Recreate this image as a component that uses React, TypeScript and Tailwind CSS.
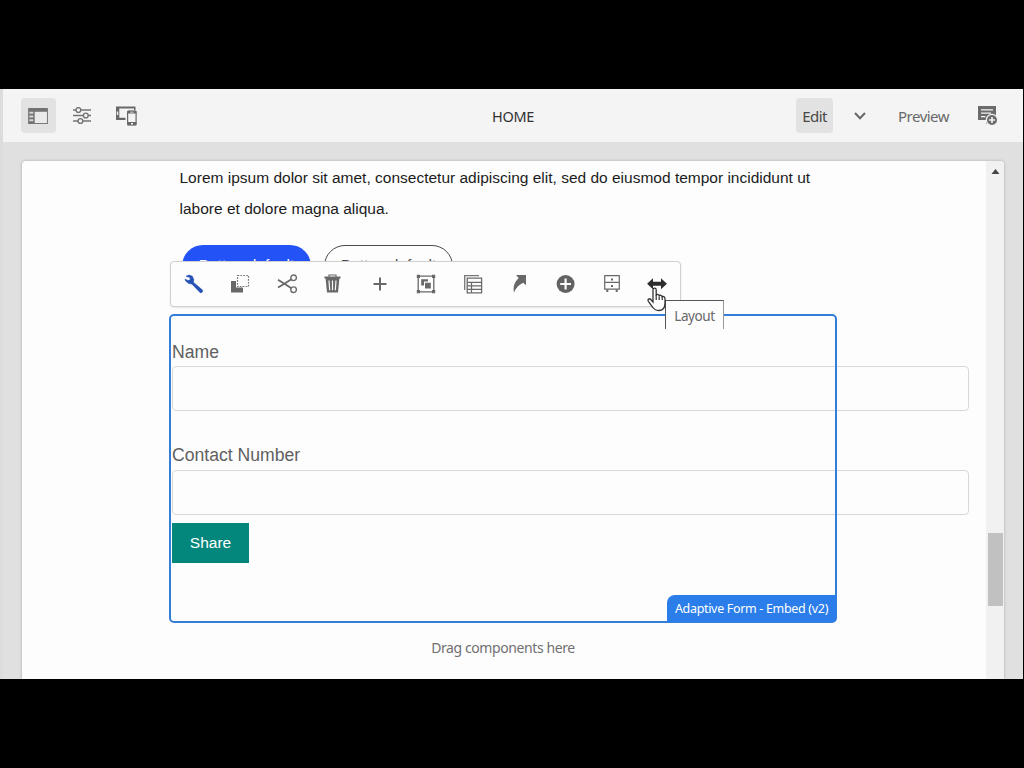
import type { ReactNode } from "react";

const clean = "font-['Noto_Sans','Open_Sans',sans-serif]";

function Tool({ children, className = "" }: { children: ReactNode; className?: string }) {
  return (
    <button className={`flex h-11 w-[46.4px] shrink-0 items-center justify-center ${className}`}>
      <svg width="20" height="20" viewBox="0 0 20 20" fill="none">
        {children}
      </svg>
    </button>
  );
}

function Header() {
  return (
    <header className={`flex h-[53px] shrink-0 items-center bg-[#f4f4f4] text-[15px] ${clean}`}>
      <div className="flex w-[465px] items-center pl-[18px]">
        <button className="flex h-[35px] w-[35px] items-center justify-center rounded-[4px] bg-[#e2e2e2] pr-px">
          <svg width="20" height="16" viewBox="0 0 21 17">
            <path d="M0 0H21V17H0Z" fill="#727272" />
            <path d="M7 4H20V16H7Z" fill="#eaeaea" />
            <path d="M1.3 4H5.5V6H1.3ZM1.3 8H5.5V10H1.3ZM1.3 12H5.5V14H1.3Z" fill="#d5d5d5" />
          </svg>
        </button>
        <button className="ml-4 flex w-5 justify-center">
          <svg width="20" height="18" viewBox="0 0 20 18" stroke="#747474" strokeWidth="1.4">
            <path d="M1 3H19M1 8.5H19M1 14H19" />
            <g fill="#f4f4f4">
              <circle cx="6.4" cy="3" r="2.4" />
              <circle cx="13.8" cy="8.5" r="2.4" />
              <circle cx="8.4" cy="14" r="2.4" />
            </g>
          </svg>
        </button>
        <button className="ml-6">
          <svg width="21" height="20" viewBox="0 0 21 20">
            <path d="M0 .5H19.5V4H18V2.6H3.3V11.8H9.5V14H0Z" fill="#686868" />
            <path d="M.8 5.5H2.2V9H.8Z" fill="#f4f4f4" />
            <rect x="11.6" y="5" width="8.5" height="14" rx="1" fill="#f4f4f4" stroke="#686868" strokeWidth="1.2" />
            <path d="M11.5 4.8H20.3V7.4H11.5ZM11.5 16H20.3V19.3H11.5Z" fill="#686868" />
            <path d="M14.2 5.8H17.5V6.6H14.2ZM15 17H17V18.4H15Z" fill="#f4f4f4" />
          </svg>
        </button>
      </div>
      <div className="w-[90px] pt-0.5 text-center text-[14.5px] tracking-[-0.35px] text-[#323232]">HOME</div>
      <div className="flex flex-1 items-center pl-[238px]">
        <button className="h-[35px] w-[37px] rounded-[4px] bg-[#e2e2e2] pt-px text-center tracking-[-0.6px] text-[#484848]">Edit</button>
        <svg className="ml-[21px]" width="12" height="8" viewBox="0 0 12 8" fill="none" stroke="#686868" strokeWidth="2">
          <path d="M1 1 6 6.3 11 1" />
        </svg>
        <button className="ml-[32px] w-[53px] pt-px text-left tracking-[-0.5px] text-[#686868]">Preview</button>
        <svg className="ml-[27px] mt-px" width="20" height="20" viewBox="0 0 20 20">
          <path d="M0 0H18V10H13L8.5 18.5V14H0Z" fill="#6b6b6b" />
          <path d="M3 3.8H15M3 7.2H13M3 10.6H7.5" stroke="#f4f4f4" strokeWidth="1.2" />
          <circle cx="14" cy="14" r="5.6" fill="#6b6b6b" stroke="#f4f4f4" strokeWidth="1.2" />
          <path d="M14 11V17M11 14H17" stroke="#f4f4f4" strokeWidth="1.6" />
        </svg>
      </div>
    </header>
  );
}

function Toolbar() {
  return (
    <div className="absolute left-[148px] top-[100px] flex h-[46px] w-[511px] overflow-hidden rounded-[4px] border border-[#d0d0d0] bg-[#fdfdfd] shadow-[0_1px_2px_rgba(0,0,0,0.1)]">
      <Tool>
        <path d="M2 2.3 5 1 8.3 2.2 9.8 5.5 9.3 8.2 18.5 16 18.4 18 16.5 18.9 7.8 10 4.8 9.5 1.6 7 1 5.2 4.3 6.5 6.2 5.8 6 3.5Z" fill="#2550b4" stroke="#2550b4" strokeWidth=".6" />
      </Tool>
      <Tool className="pr-px">
        <path d="M1 7H6V13.5H13V18.5H1Z" fill="#686868" />
        <path d="M7.5 1.5H18.5V12.5H7.5Z" stroke="#777" strokeWidth="1.2" strokeDasharray="1.7 1.2" />
      </Tool>
      <Tool>
        <g stroke="#6b6b6b" strokeWidth="1.4">
          <circle cx="16.6" cy="3.8" r="2.8" />
          <circle cx="16.6" cy="15.7" r="2.8" />
          <path d="M14.4 5.3 7 10 1 13.5M14.4 14.2 9 10.7 1 5.8" strokeWidth="1.9" />
        </g>
      </Tool>
      <Tool>
        <path d="M6 2.7V1H13V2.7" stroke="#686868" strokeWidth="1.2" />
        <path d="M1.5 2.6H17.5V4.6H16.4L15 18.5H4L2.6 4.6H1.5Z" fill="#686868" />
        <path d="M6 6.5 6.7 16.3M9.5 6.5V16.3M13 6.5 12.3 16.3" stroke="#f8f8f8" strokeWidth="1.2" />
      </Tool>
      <Tool>
        <path d="M10 3.5V16.5M3.5 10H16.5" stroke="#686868" strokeWidth="2" />
      </Tool>
      <Tool>
        <path d="M2.2 2.2H17.8V17.8H2.2Z" stroke="#686868" strokeWidth="1.3" />
        <path d="M.8.8H4V4H.8ZM16 .8H19.2V4H16ZM.8 16H4V19.2H.8ZM16 16H19.2V19.2H16ZM5.2 5.2H12V7.6H8V11.5H5.2ZM9 8.7H14.8V14.5H9Z" fill="#686868" />
      </Tool>
      <Tool>
        <path d="M1.7 16V1.6H16" stroke="#777" strokeWidth="1.3" />
        <path d="M4.2 4.2H18.6V18.8H4.2Z" stroke="#6b6b6b" strokeWidth="1.3" />
        <path d="M4.2 8.3H18.6M4.2 11.8H18.6M4.2 15.3H18.6M8.5 8.3V18.8" stroke="#6b6b6b" strokeWidth="1.2" />
      </Tool>
      <Tool>
        <path d="M7 1H17V11.2L14.2 8.8C9.3 11.4 6.8 14 5 18.8 3.8 13 5.3 8.5 9.7 4.1Z" fill="#686868" />
      </Tool>
      <Tool>
        <circle cx="10.6" cy="10" r="9" fill="#626262" />
        <path d="M10.6 4.6V15.4M5.2 10H16" stroke="#fdfdfd" strokeWidth="2.2" />
      </Tool>
      <Tool>
        <path d="M2.7 1.7H17.3V15.2H2.7ZM2.7 8.4H17.3" stroke="#686868" strokeWidth="1.2" />
        <path d="M9 4.4H11V6.4H9ZM9 11H11V13H9ZM4.3 15.5H6.3V18H4.3ZM13.7 15.5H15.7V18H13.7Z" fill="#686868" />
      </Tool>
      <Tool className="pr-[2px]">
        <path d="M.1 9.8 6 4.2V7.8H14V4.2L19.9 9.8 14 15.3V11.8H6V15.3Z" fill="#2d2d2d" />
      </Tool>
    </div>
  );
}

function Field({ label, className }: { label: string; className: string }) {
  return (
    <label className={`block w-[797px] text-[17.6px] leading-5 text-[#606060] ${className}`}>
      {label}
      <input className="block h-[45px] w-full rounded-[4px] border border-[#d8d8d8] bg-transparent px-3 outline-none" />
    </label>
  );
}

export default function App() {
  return (
    <div className="h-[768px] w-[1024px] overflow-hidden bg-black pt-[89px] font-['Liberation_Sans',Arial,sans-serif]">
      <div className="flex h-[590px] w-[1023px] flex-col border-l-[3px] border-[#dcdcdc] bg-[#e0e0e0]">
        <Header />
        <main className="flex-1 pl-[19px] pt-[19px]">
          <div className="relative flex h-[518px] w-[982px] overflow-hidden rounded-t-[4px] bg-[#fdfdfd] shadow-[0_0_3px_rgba(0,0,0,0.25)]">
            <div className="w-[964px]">
              <p className="ml-[157.5px] mt-px w-[660px] text-[15.5px] leading-[31px] text-[#1b1b1b]">
                Lorem ipsum dolor sit amet, consectetur adipiscing elit, sed do eiusmod tempor incididunt ut
                <br />
                labore et dolore magna aliqua.
              </p>
              <div className="ml-[160px] mt-[21px] flex gap-[13px] text-[15.5px]">
                <button className="h-[42px] w-[129px] rounded-full bg-[#2353f6] pb-0.5 text-white">Button default</button>
                <button className="h-[42px] w-[129px] rounded-full border-[1.5px] border-[#4a4a4a] pb-0.5 text-[#4a4a4a]">Button default</button>
              </div>
              <form className="ml-[150px] mt-[55px]">
                <Field label="Name" className="[&>input]:mt-[4px]" />
                <Field label="Contact Number" className="mt-[34px] [&>input]:mt-[5px]" />
                <button type="button" className="mt-[8px] block h-10 w-[77px] bg-[#03867c] text-[15.5px] text-white">Share</button>
              </form>
              <p className={`-ml-[2px] mt-[74px] text-center text-[14px] tracking-[-0.4px] text-[#707070] ${clean}`}>Drag components here</p>
            </div>
            <div className="flex w-[18px] flex-col items-center bg-[#f1f1f1]">
              <svg className="mt-[8px] shrink-0" width="9" height="5" viewBox="0 0 8 5">
                <path d="M0 5 4 0 8 5Z" fill="#454545" />
              </svg>
              <div className="mt-[359px] h-[73px] w-[15px] bg-[#c1c1c1]" />
            </div>

            <div className="pointer-events-none absolute left-[147px] top-[153px] flex h-[309px] w-[668px] items-end justify-end rounded-[5px] border-2 border-[#347dd8]">
              <span className={`-mb-px -mr-px flex h-[27px] w-[169px] items-center justify-center rounded-br-[4px] rounded-tl-[8px] bg-[#2b7de9] pt-0.5 text-[12.5px] tracking-[-0.32px] text-white ${clean}`}>
                Adaptive Form - Embed (v2)
              </span>
            </div>
            <Toolbar />
            <div className={`absolute left-[643px] top-[139px] flex h-[29px] w-[59px] items-center justify-center border border-b-0 border-[#555] border-r-[#999] bg-[#fdfdfd] pt-0.5 text-[13.5px] tracking-[-0.4px] text-[#686868] ${clean}`}>
              Layout
            </div>
            <svg className="absolute left-[625px] top-[126px]" width="20" height="25" viewBox="0 0 20 25">
              <path d="M6 15V3C6 .6 9.2.6 9.2 3V9C9.2 6.8 12.2 7 12.2 9.3 12.5 7.6 15.2 8 15.2 10.2 15.8 8.8 18 9.4 18 11.6V16C18 21.2 15.5 23.5 11.7 23.5 8 23.5 6.5 21.8 4.8 19L1.4 14.3C.2 12.3 2.5 11 3.8 12.5Z" fill="#fff" stroke="#333" strokeWidth="1.3" />
              <path d="M9.2 8.5V13M12.2 9.5V13M15.2 10V13" stroke="#333" strokeWidth="1.2" />
            </svg>
          </div>
        </main>
      </div>
    </div>
  );
}
